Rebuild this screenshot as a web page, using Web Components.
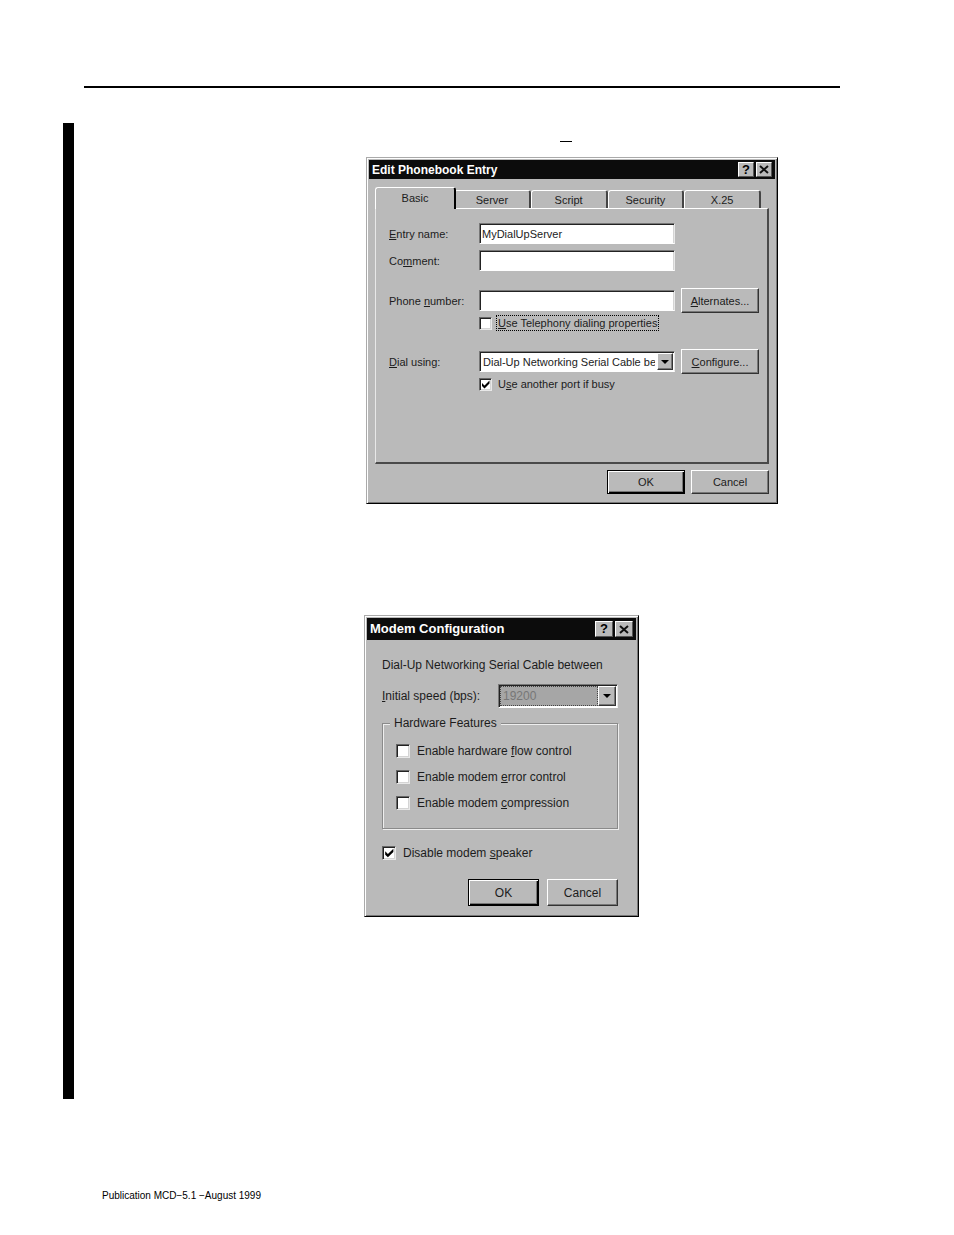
<!DOCTYPE html>
<html lang="en">
<head>
<meta charset="utf-8">
<meta name="viewport" content="width=device-width, initial-scale=1">
<title>Publication MCD-5.1</title>
<style>
  body { margin: 0; background: #fff; font-family: "Liberation Sans", Arial, sans-serif; }
</style>
</head>
<body>
<manual-page>
  <edit-phonebook></edit-phonebook>
  <modem-config></modem-config>
  <span slot="footer">Publication MCD−5.1 −August 1999</span>
</manual-page>

<script>
const define = (name, html, setup) => {
  const template = document.createElement('template');
  template.innerHTML = html;
  customElements.define(name, class extends HTMLElement {
    constructor() {
      super();
      this.attachShadow({ mode: 'open' }).append(template.content.cloneNode(true));
    }
    connectedCallback() {
      if (setup) setup(this, this.shadowRoot);
    }
  });
};

// "_" in a label marks the access key that follows it
const mnemonic = (el, text) => {
  const [before, after] = text.split('_');
  el.textContent = before;
  if (after) {
    const u = document.createElement('u');
    u.textContent = after[0];
    el.append(u, after.slice(1));
  }
};

define('manual-page', `
  <style>
    :host { display: block; padding-top: 86px; }
    hr { height: 2px; margin: 0 114px 35px 84px; border: 0; background: #000; }
    main { display: grid; grid-template-columns: 11px minmax(0, 1fr); margin-left: 63px; }
    .bar { background: #000; }
    .content { display: flex; flex-direction: column; padding: 18px 0 182px 290px; }
    .dash { width: 12px; height: 1px; margin: 0 0 15px 196px; background: #000; }
    footer { padding: 89px 0 30px 102px; font-size: 10px; line-height: 16px; color: #000; }
  </style>
  <hr>
  <main>
    <div class="bar"></div>
    <div class="content"><div class="dash"></div><slot></slot></div>
  </main>
  <footer><slot name="footer"></slot></footer>`);

define('win-dialog', `
  <style>
    :host { display: block; box-sizing: border-box; background: #bababa; color: #1c1c1c;
      border: 1px solid; border-color: #aaa #000 #000 #aaa;
      box-shadow: inset 1px 1px #fff, inset -1px -1px #777; padding: 2px; }
    header { display: flex; align-items: center; gap: 2px; height: var(--bar, 19px); padding: 0 3px;
      background: #0c0c0c; color: #fff; }
    h2 { flex: 1; margin: 0; font-size: var(--title, 12px); line-height: 16px; font-weight: bold; white-space: nowrap; }
    button { display: grid; place-items: center; box-sizing: border-box; width: var(--cap-w, 16px); height: var(--cap-h, 15px);
      padding: 0; border: 1px solid; border-color: #fff #555 #555 #fff; background: #bababa; color: #000;
      font: bold 13px/12px "Liberation Sans", sans-serif; }
  </style>
  <header>
    <h2></h2>
    <button type="button" aria-label="Help">?</button>
    <button type="button" aria-label="Close"><svg width="10" height="9" viewBox="0 0 10 9"><path d="M1 1l8 7M9 1L1 8" stroke="#111" stroke-width="2"/></svg></button>
  </header>
  <slot></slot>`,
  (host, root) => { root.querySelector('h2').textContent = host.getAttribute('heading'); });

define('win-button', `
  <style>
    :host { display: block; }
    button { display: block; box-sizing: border-box; width: 100%; height: var(--button, 25px); padding: 0;
      border: 1px solid; border-color: #fff #333 #333 #fff; box-shadow: inset -1px -1px #777;
      background: #bababa; color: inherit; font: inherit; }
    :host([default]) button { border-color: #000; box-shadow: inset 1px 1px #fff, inset -1px -1px #000, inset -2px -2px #777; }
  </style>
  <button type="button"></button>`,
  (host, root) => mnemonic(root.querySelector('button'), host.getAttribute('label')));

define('win-check', `
  <style>
    :host { display: flex; }
    label { display: flex; align-items: center; gap: var(--check-gap, 4px); height: 16px; white-space: nowrap; }
    input { appearance: none; box-sizing: border-box; flex: none; width: var(--check, 13px); height: var(--check, 13px); margin: 0;
      border: 1px solid; border-color: #666 #e8e8e8 #e8e8e8 #666;
      box-shadow: inset 1px 1px #222, inset -1px -1px #d4d4d4; background-color: #fff; }
    input:checked { background: #fff url("data:image/svg+xml,%3Csvg xmlns='http://www.w3.org/2000/svg' viewBox='0 0 11 11'%3E%3Cpath d='M2 4v3l2.500 2.500L9.500 4.500v-3L4.500 6.500z'/%3E%3C/svg%3E"); }
    span { padding: 0 1px; border: 1px dotted transparent; line-height: 14px; }
    :host([focused]) span { border-color: #000; }
  </style>
  <label><input type="checkbox"><span></span></label>`,
  (host, root) => {
    root.querySelector('input').checked = host.hasAttribute('checked');
    mnemonic(root.querySelector('span'), host.getAttribute('label'));
  });

define('win-field', `
  <style>
    :host { display: grid; grid-template-columns: 90px minmax(0, 1fr) 78px; align-items: center; }
    label { line-height: 16px; white-space: nowrap; }
    input { box-sizing: border-box; width: 100%; height: 21px; margin: 0; padding: 0 2px; border: 1px solid;
      border-color: #777 #e8e8e8 #fff #777; box-shadow: inset 1px 1px #222, inset -1px 0 #d4d4d4;
      background: #fff; color: inherit; font: inherit; outline: 0; }
    .box { padding-right: 6px; }
  </style>
  <label for="f"></label><div class="box"><input id="f" type="text"></div><slot></slot>`,
  (host, root) => {
    mnemonic(root.querySelector('label'), host.getAttribute('label'));
    root.querySelector('input').value = host.getAttribute('value') || '';
  });

define('win-select', `
  <style>
    :host { display: grid; grid-template-columns: var(--columns, 90px minmax(0, 1fr) 78px); align-items: center; }
    label { line-height: 16px; white-space: nowrap; }
    .space { padding-right: var(--after, 6px); }
    .box { display: flex; box-sizing: border-box; height: var(--select, 21px); padding: 1px; border: 1px solid;
      border-color: #777 #e8e8e8 #fff #777; box-shadow: inset 1px 1px #222; background: #fff; }
    select { appearance: none; flex: 1; min-width: 0; margin: 0; padding: 0 2px; border: 0; border-radius: 0;
      background: none; color: inherit; font: inherit; outline: 0; text-overflow: clip; }
    select:disabled { border: 1px dotted #444; background: #a6a6a6; color: #777; opacity: 1; padding: 0 2px; }
    .arrow { display: grid; place-items: center; box-sizing: border-box; width: var(--arrow, 16px);
      border: 1px solid; border-color: #fff #333 #333 #fff; box-shadow: inset -1px -1px #777; background: #bababa; pointer-events: none; }
  </style>
  <label for="s"></label>
  <div class="space"><div class="box"><select id="s"></select><span class="arrow"><svg width="8" height="4" viewBox="0 0 8 4"><path d="M0 0h8L4 4z"/></svg></span></div></div>
  <slot></slot>`,
  (host, root) => {
    mnemonic(root.querySelector('label'), host.getAttribute('label'));
    const select = root.querySelector('select');
    select.replaceChildren(new Option(host.getAttribute('value')));
    select.disabled = host.hasAttribute('disabled');
  });

define('win-tabs', `
  <style>
    :host { display: block; }
    .strip { display: flex; align-items: flex-end; padding-right: 8px; }
    button { box-sizing: border-box; flex: 1; height: 18px; padding: 0; border: 1px solid; border-width: 1px 2px 0 1px;
      border-color: #fff #444 #fff #fff; border-radius: 3px 3px 0 0; background: #bababa; color: inherit; font: inherit; }
    button[aria-selected=true] { flex: 0 0 81px; height: 22px; margin: 0 -2px -1px 0; padding-bottom: 2px; border-right-color: #000; position: relative; }
    .panel { border: 1px solid; border-width: 1px 2px 2px 1px; border-color: #fff #4a4a4a #4a4a4a #e8e8e8; padding: 14px 8px 70px 13px; }
  </style>
  <div class="strip" role="tablist"></div>
  <div class="panel" role="tabpanel"><slot></slot></div>`,
  (host, root) => {
    root.querySelector('.strip').replaceChildren(...host.getAttribute('tabs').split(',').map((name, i) => {
      const tab = document.createElement('button');
      tab.type = 'button';
      tab.setAttribute('role', 'tab');
      tab.setAttribute('aria-selected', i === 0);
      tab.textContent = name;
      return tab;
    }));
  });

define('edit-phonebook', `
  <style>
    :host { display: block; max-width: 412px; margin: 0 0 111px 2px; width: 100%; font-size: 11px; }
    .body { padding: 8px 6px 7px; }
    .fields { display: flex; flex-direction: column; gap: 6px; }
    .group { display: flex; flex-direction: column; gap: 2px; margin-top: 17px; }
    .group + .group { margin-top: 18px; }
    win-check { margin-left: 90px; }
    .actions { display: flex; justify-content: flex-end; gap: 6px; margin-top: 6px; --button: 24px; }
    .actions win-button { width: 78px; }
  </style>
  <win-dialog heading="Edit Phonebook Entry">
    <div class="body">
      <win-tabs tabs="Basic,Server,Script,Security,X.25">
        <div class="fields">
          <win-field label="_Entry name:" value="MyDialUpServer"></win-field>
          <win-field label="Co_mment:"></win-field>
        </div>
        <div class="group">
          <win-field label="Phone _number:"><win-button label="_Alternates..."></win-button></win-field>
          <win-check label="_Use Telephony dialing properties" focused></win-check>
        </div>
        <div class="group">
          <win-select label="_Dial using:" value="Dial-Up Networking Serial Cable be"><win-button label="_Configure..."></win-button></win-select>
          <win-check label="U_se another port if busy" checked></win-check>
        </div>
      </win-tabs>
      <div class="actions"><win-button label="OK" default></win-button><win-button label="Cancel"></win-button></div>
    </div>
  </win-dialog>`);

define('modem-config', `
  <style>
    :host { display: block; max-width: 275px; width: 100%; font-size: 12px; --check: 14px; --check-gap: 5px; }
    win-dialog { --bar: 22px; --title: 13px; --cap-w: 18px; --cap-h: 16px; }
    .body { padding: 17px 18px 8px 15px; }
    p { margin: 0 0 11px; line-height: 16px; white-space: nowrap; }
    win-select { --columns: 116px minmax(0, 1fr); --after: 0; --select: 24px; --arrow: 18px; }
    fieldset { display: flex; flex-direction: column; gap: 10px; min-width: 0; margin: 7px 0 16px; padding: 12px 13px 17px;
      border: 1px solid #8a8a8a; box-shadow: 1px 1px #eee, inset 1px 1px #eee; }
    legend { margin-left: -6px; padding: 0 4px; line-height: 16px; background: #bababa; }
    .actions { display: flex; justify-content: flex-end; gap: 8px; margin-top: 18px; --button: 27px; }
    .actions win-button { width: 71px; }
  </style>
  <win-dialog heading="Modem Configuration">
    <div class="body">
      <p>Dial-Up Networking Serial Cable between</p>
      <win-select label="_Initial speed (bps):" value="19200" disabled></win-select>
      <fieldset>
        <legend>Hardware Features</legend>
        <win-check label="Enable hardware _flow control"></win-check>
        <win-check label="Enable modem _error control"></win-check>
        <win-check label="Enable modem _compression"></win-check>
      </fieldset>
      <win-check label="Disable modem _speaker" checked></win-check>
      <div class="actions"><win-button label="OK" default></win-button><win-button label="Cancel"></win-button></div>
    </div>
  </win-dialog>`);
</script>
</body>
</html>
